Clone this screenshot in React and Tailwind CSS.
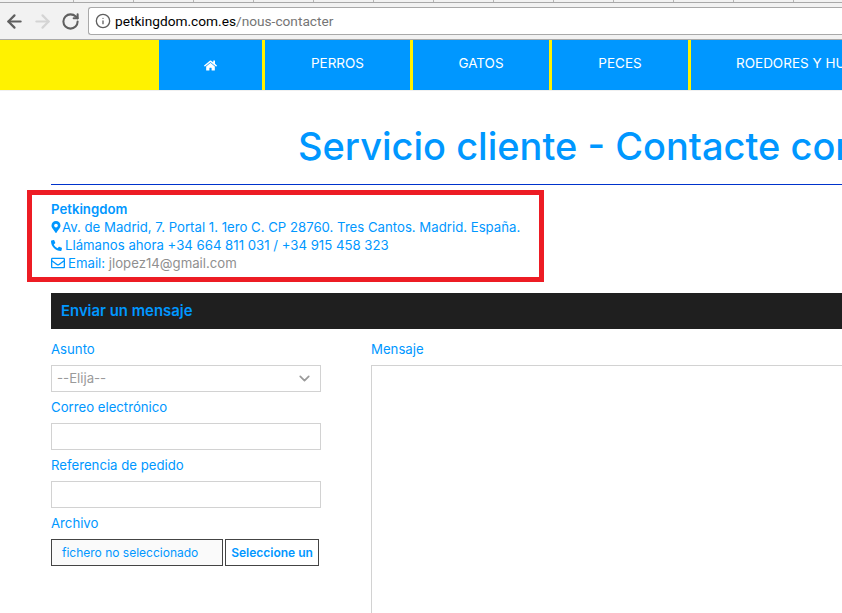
import { ArrowLeft, ArrowRight, RotateCw, Info, ChevronDown } from "lucide-react";
import { FaHome, FaMapMarkerAlt, FaPhone, FaRegEnvelope } from "react-icons/fa";

const navItems = [
  { label: "PERROS", width: "w-[148px]" },
  { label: "GATOS", width: "w-[139px]" },
  { label: "PECES", width: "w-[139px]" },
];

const tabs = Array.from({ length: 13 }, (_, i) => i);

const Field = ({ label, children }) => (
  <div>
    <div className="h-[31px] pt-[6px] text-[13.2px] leading-[18px] text-[#0097ff]">{label}</div>
    {children}
  </div>
);

const App = () => {
  return (
    <div className="relative w-[842px] h-[613px] overflow-hidden bg-white font-['Inter',sans-serif]">
      {/* browser chrome */}
      <div className="flex h-[3px] pl-[73px] bg-[#f2f2f2] border-b border-[#a9a9a9]">
        {tabs.map((i) => (
          <div key={i} className="w-[60px] shrink-0 border-l border-[#b5b5b5]" />
        ))}
      </div>
      <div className="flex items-center h-[37px] bg-[#f2f2f2] border-b border-[#a9a9a9] pl-[4px]">
        <ArrowLeft size={21} strokeWidth={2.5} className="text-[#5f5f5f]" />
        <ArrowRight size={21} strokeWidth={2.5} className="ml-[7px] text-[#d4d4d4]" />
        <RotateCw size={19} strokeWidth={2.6} className="ml-[8px] text-[#5f5f5f]" />
        <div className="flex items-center flex-1 h-[28px] ml-[8px] pl-[6px] bg-white border border-[#a9a9a9] border-r-0 rounded-l-[3px]">
          <Info size={16} strokeWidth={2} className="text-[#5f5f5f]" />
          <span className="ml-[4px] text-[13.7px] font-['Roboto',sans-serif] text-black">
            petkingdom.com.es<span className="text-[#757575]">/nous-contacter</span>
          </span>
        </div>
      </div>

      {/* nav */}
      <div className="flex h-[50px] bg-[#0097ff] text-white text-[13.5px] shadow-[0_1px_0_#f0f0f0]">
        <div className="w-[159px] bg-[#fff200]" />
        <div className="flex items-center justify-center w-[103px] pt-[1px] pr-[1px]">
          <FaHome size={13} />
        </div>
        {navItems.map((item) => (
          <div key={item.label} className={`flex items-center justify-center border-l-[3px] border-[#fff200] pb-[3px] ${item.width}`}>
            {item.label}
          </div>
        ))}
        <div className="flex items-center flex-1 min-w-0 pl-[42px] pb-[3px] whitespace-nowrap overflow-hidden border-l-[3px] border-[#fff200]">
          <span className="ml-[3px]">ROEDORES Y HURONES</span>
        </div>
      </div>

      {/* content */}
      <div className="pl-[51px]">
        <div className="h-[95px] pt-[32px] border-b border-[#0033cc] pl-[247px] whitespace-nowrap overflow-hidden text-[38px] font-medium leading-[48px] text-[#0097ff]">
          Servicio cliente - Contacte con nosotros
        </div>

        <div className="pt-[15px] text-[13.2px] leading-[18px] text-[#0097ff]">
          <div className="font-semibold">Petkingdom</div>
          <div className="flex items-center gap-[0.5px]">
            <FaMapMarkerAlt size={12} className="-ml-[1.5px]" />
            Av. de Madrid, 7. Portal 1. 1ero C. CP 28760. Tres Cantos. Madrid. España.
          </div>
          <div className="flex items-center gap-[3px]">
            <FaPhone size={11} className="-scale-x-100" />
            Llámanos ahora +34 664 811 031 / +34 915 458 323
          </div>
          <div className="flex items-center gap-[3px]">
            <FaRegEnvelope size={14} />
            <span>Email: <span className="text-[#8f8f8f]">jlopez14@gmail.com</span></span>
          </div>
        </div>

        <div className="flex items-center h-[36px] mt-[21px] pl-[10px] bg-[#1f1f1f] text-[14.9px] font-semibold text-[#0097ff]">
          Enviar un mensaje
        </div>

        <div className="flex mt-[5px]">
          <div className="w-[270px]">
            <Field label="Asunto">
              <div className="flex items-center justify-between h-[27px] pl-[5px] pr-[7px] border border-[#d2d2d2] text-[13.2px] text-[#9a9a9a]">
                --Elija--
                <ChevronDown size={17} strokeWidth={2.4} className="text-[#9a9a9a]" />
              </div>
            </Field>
            <Field label="Correo electrónico">
              <div className="h-[27px] border border-[#d2d2d2]" />
            </Field>
            <Field label="Referencia de pedido">
              <div className="h-[27px] border border-[#d2d2d2]" />
            </Field>
            <Field label="Archivo">
              <div className="flex gap-[2px] text-[12px] text-[#0097ff]">
                <div className="flex items-center w-[172px] h-[27px] pl-[10px] border border-[#444444] bg-[#fafafa]">
                  fichero no seleccionado
                </div>
                <div className="flex items-center justify-center w-[94px] h-[27px] border border-[#444444] font-semibold whitespace-nowrap overflow-hidden">
                  Seleccione un
                </div>
              </div>
            </Field>
          </div>
          <div className="flex-1 ml-[50px]">
            <div className="h-[31px] pt-[6px] text-[13.2px] leading-[18px] text-[#0097ff]">Mensaje</div>
            <div className="h-[300px] border border-[#d2d2d2] border-r-0" />
          </div>
        </div>
      </div>

      {/* red annotation drawn over the screenshot */}
      <div className="absolute left-[27px] top-[190px] w-[517px] h-[92px] border-[5px] border-[#ed1c24]" />
    </div>
  );
};

export default App;
